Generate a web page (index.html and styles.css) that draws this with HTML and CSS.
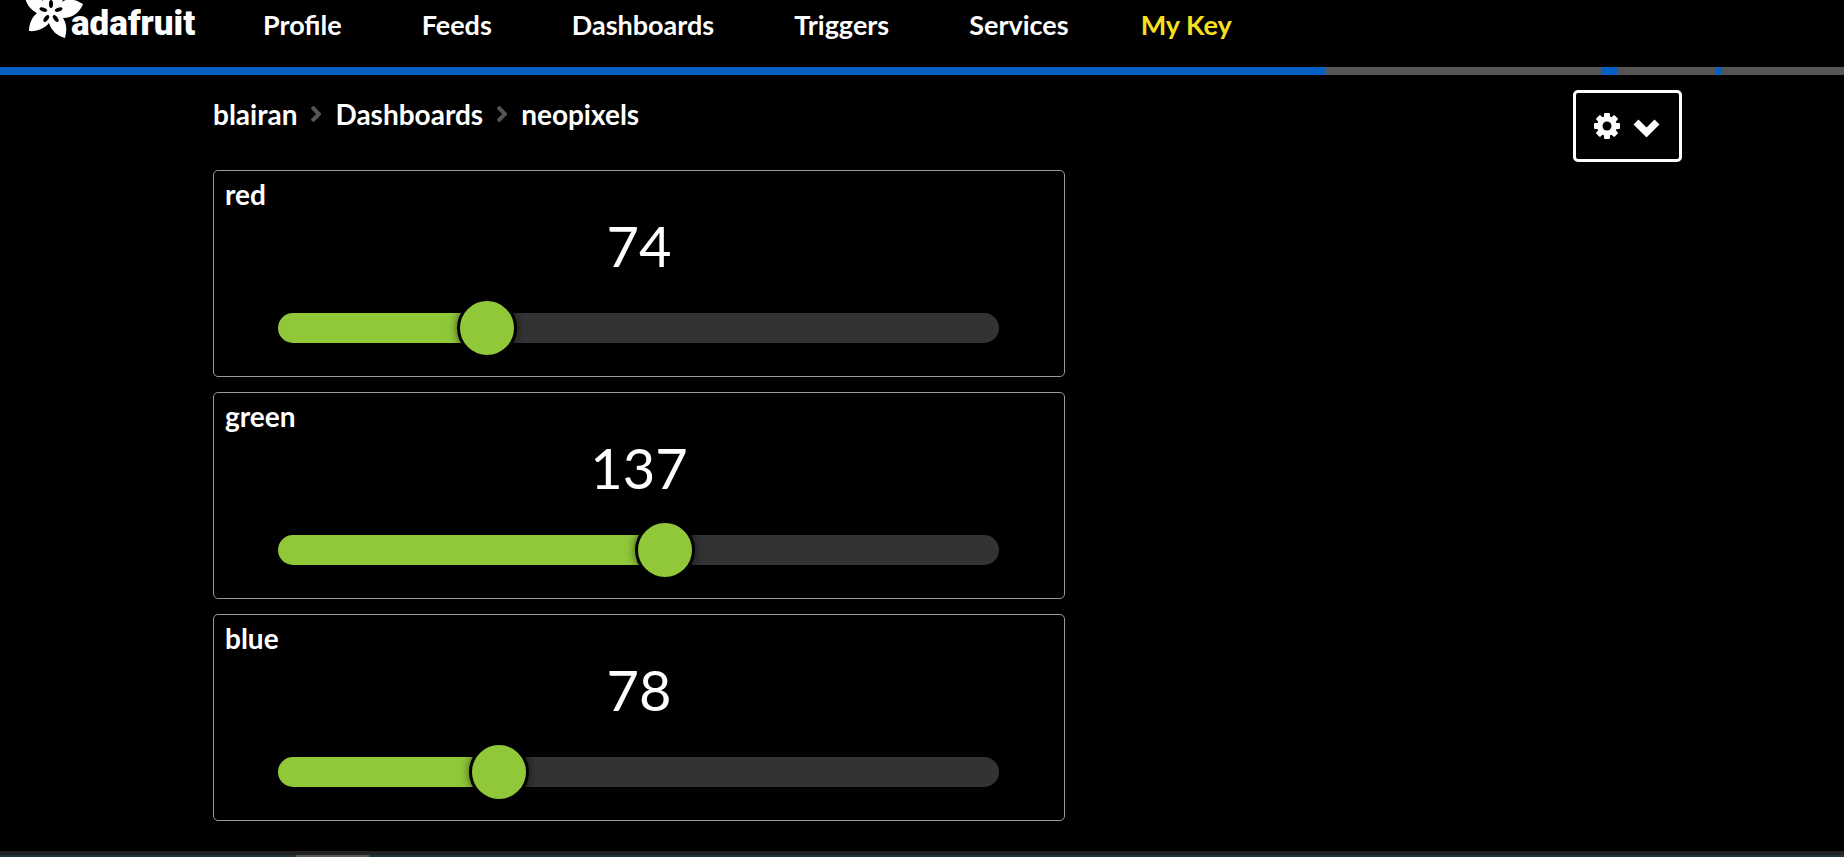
FILE: index.html
```html
<!DOCTYPE html>
<html lang="en">
<head>
    <meta charset="UTF-8">
    <meta name="viewport" content="width=device-width, initial-scale=1.0">
    <title>neopixels - Adafruit IO</title>
    <link rel="stylesheet" href="styles.css">
</head>
<body>
    <header class="header">
        <a class="logo" href="#" aria-label="adafruit">
            <svg class="flower" viewBox="0 0 58 54" aria-hidden="true">
                <path fill="#fff" d="M28 0 C37 5 40 12 37 18 C42 14 50 15 58 20 C55 28 48 34 38 34 C42 40 42 47 40 54 C32 52 26 46 24 39 C20 44 12 48 4 47 C4 40 7 33 12 29 C6 26 1 20 0 13 C7 12 14 13 18 17 C18 10 22 4 28 0Z"/>
                <g fill="#000">
                    <ellipse cx="26" cy="20" rx="2" ry="4"/>
                    <ellipse cx="26" cy="20" rx="2" ry="4" transform="rotate(72 26 28)"/>
                    <ellipse cx="26" cy="20" rx="2" ry="4" transform="rotate(144 26 28)"/>
                    <ellipse cx="26" cy="20" rx="2" ry="4" transform="rotate(216 26 28)"/>
                    <ellipse cx="26" cy="20" rx="2" ry="4" transform="rotate(288 26 28)"/>
                </g>
            </svg>
            <span class="wordmark">adafruit</span>
        </a>
        <nav class="nav">
            <a href="#">Profile</a>
            <a href="#">Feeds</a>
            <a href="#">Dashboards</a>
            <a href="#">Triggers</a>
            <a href="#">Services</a>
            <a class="key" href="#">My Key</a>
        </nav>
    </header>
    <div class="activity"></div>

    <main class="page">
        <div class="toolbar">
            <nav class="breadcrumb">
                <a href="#">blairan</a>
                <svg class="sep" viewBox="0 0 10 16"><path d="M1 1 L8 8 L1 15"/></svg>
                <a href="#">Dashboards</a>
                <svg class="sep" viewBox="0 0 10 16"><path d="M1 1 L8 8 L1 15"/></svg>
                <a href="#">neopixels</a>
            </nav>
            <button class="settings" type="button" aria-label="Dashboard settings">
                <svg class="gear" viewBox="-13 -13 26 26">
                    <circle r="10" fill="#fff"/>
                    <g fill="#fff">
                        <rect x="-3" y="-13" width="6" height="26" rx="1"/>
                        <rect x="-3" y="-13" width="6" height="26" rx="1" transform="rotate(45)"/>
                        <rect x="-3" y="-13" width="6" height="26" rx="1" transform="rotate(90)"/>
                        <rect x="-3" y="-13" width="6" height="26" rx="1" transform="rotate(135)"/>
                    </g>
                    <circle r="4.500" fill="#000"/>
                </svg>
                <svg class="chevron" viewBox="0 0 27 18"><path d="M3 3 L13.500 13.500 L24 3"/></svg>
            </button>
        </div>

        <div class="blocks">
            <section class="block">
                <label for="red">red</label>
                <output for="red">74</output>
                <div class="slider" style="--fill: 29%">
                    <input type="range" id="red" min="0" max="255" value="74">
                </div>
            </section>
            <section class="block">
                <label for="green">green</label>
                <output for="green">137</output>
                <div class="slider" style="--fill: 53.7%">
                    <input type="range" id="green" min="0" max="255" value="137">
                </div>
            </section>
            <section class="block">
                <label for="blue">blue</label>
                <output for="blue">78</output>
                <div class="slider" style="--fill: 30.6%">
                    <input type="range" id="blue" min="0" max="255" value="78">
                </div>
            </section>
        </div>
    </main>

    <footer class="footer"></footer>

    <script>
        document.querySelectorAll('.block').forEach(block => {
            const input = block.querySelector('input');
            input.addEventListener('input', () => {
                block.querySelector('output').value = input.value;
                block.querySelector('.slider').style.setProperty('--fill', `${input.value / 255 * 100}%`);
            });
        });
    </script>
</body>
</html>
```
FILE: styles.css
```css
* {
    box-sizing: border-box;
}
body {
    margin: 0;
    min-height: 100vh;
    display: flex;
    flex-direction: column;
    overflow: hidden;
    background-color: #000;
    color: #fff;
    font-family: Lato, sans-serif;
    font-size: 28px;
    font-weight: 700;
    line-height: 32px;
}
a {
    color: #fff;
    text-decoration: none;
}
.header {
    display: flex;
    height: 67px;
    padding-left: 25px;
}
.logo {
    display: flex;
    width: 238px;
}
.flower {
    flex: none;
    width: 58px;
    height: 54px;
    margin-top: -16px;
}
.wordmark {
    margin: 8px 0 0 -12px;
    font-family: Roboto, sans-serif;
    font-size: 35px;
    font-weight: 900;
    line-height: 32px;
}
.nav {
    display: flex;
    gap: 80px;
    padding-top: 9px;
    font-size: 27px;
}
.nav .key {
    margin-left: -8px;
    color: #f9e01e;
}
/* Live feed activity line */
.activity {
    height: 8px;
    background: linear-gradient(to right,
        #0560c4 1325px, #555 1325px, #555 1602px,
        #0560c4 1602px, #0560c4 1618px, #555 1618px, #555 1715px,
        #0560c4 1715px, #0560c4 1722px, #555 1722px);
}
.page {
    flex: 1;
    padding: 15px 162px 0 213px;
}
.toolbar {
    display: flex;
    justify-content: space-between;
    align-items: flex-start;
    height: 80px;
}
.breadcrumb {
    display: flex;
    align-items: center;
    gap: 14px;
    padding-top: 8px;
}
.sep {
    width: 10px;
    height: 16px;
    fill: none;
    stroke: #555;
    stroke-width: 4;
}
.settings {
    display: flex;
    align-items: center;
    justify-content: center;
    gap: 13px;
    width: 109px;
    height: 72px;
    padding: 0 2px 0 0;
    background-color: #000;
    border: 3px solid #fff;
    border-radius: 5px;
    cursor: pointer;
}
.gear {
    width: 26px;
    height: 26px;
}
.chevron {
    width: 27px;
    height: 18px;
    margin-top: 4px;
    fill: none;
    stroke: #fff;
    stroke-width: 7;
}
.blocks {
    display: flex;
    flex-direction: column;
    gap: 15px;
    width: 58%;
}
.block {
    display: flex;
    flex-direction: column;
    height: 207px;
    padding: 7px 11px;
    border: 1px solid #999;
    border-radius: 5px;
}
.block output {
    margin-top: 4px;
    font-size: 56px;
    font-weight: 400;
    line-height: 64px;
    text-align: center;
}
.slider {
    height: 30px;
    margin: 35px 54px 0 53px;
    border-radius: 15px;
    background: linear-gradient(to right, #90c83a var(--fill), #333 var(--fill));
}
/* Wider than the bar by one thumb, so the thumb centre can reach both ends */
.slider input {
    -webkit-appearance: none;
    appearance: none;
    display: block;
    position: relative;
    width: calc(100% + 60px);
    height: 60px;
    margin: 0 -30px;
    top: -15px;
    background: none;
    cursor: pointer;
}
.slider input::-webkit-slider-thumb {
    -webkit-appearance: none;
    width: 60px;
    height: 60px;
    border: 3px solid #000;
    border-radius: 50%;
    background-color: #90c83a;
    box-shadow: 0 0 10px rgba(0, 0, 0, 0.6);
}
.footer {
    height: 6px;
    border-top: 4px solid #222;
    background: linear-gradient(to right, #22343c 296px, #555d62 296px, #555d62 369px, #22343c 369px);
}
```
